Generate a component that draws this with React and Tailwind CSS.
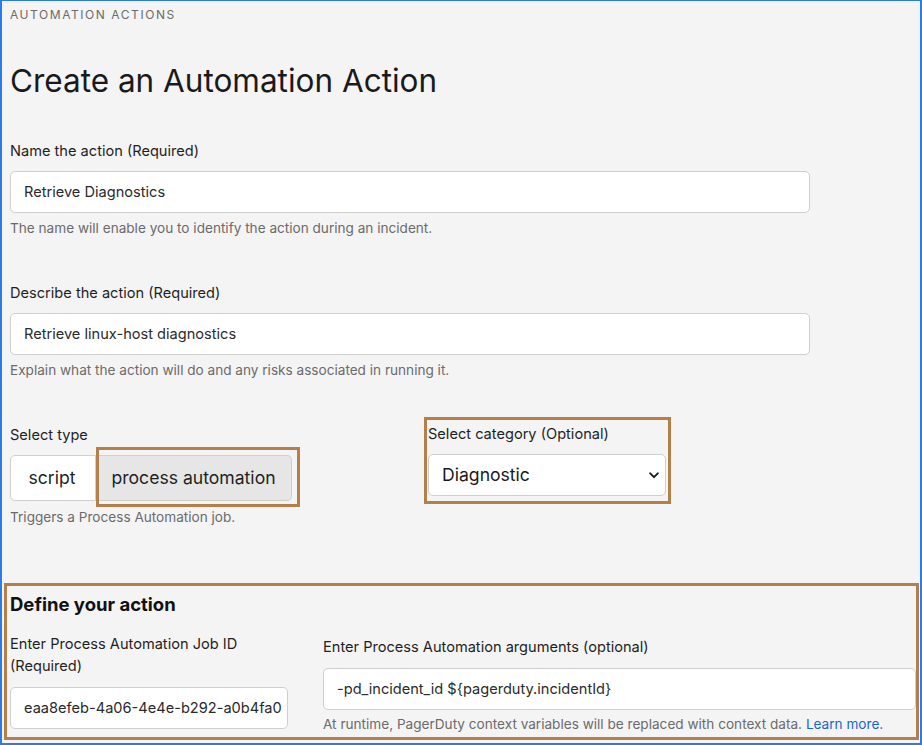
import React from "react";

const font = { fontFamily: "Inter, 'Noto Sans', sans-serif" };

function Field({ label, value, help }) {
  return (
    <div className="flex flex-col">
      <div className="text-[14.6px] leading-[20px] text-[#1f1f1f]">{label}</div>
      <div className="mt-[10px] w-[800px] h-[42px] bg-white border border-[#cfcfcf] rounded-[5px] flex items-center pl-[13px] pt-[2px] text-[14.6px] text-[#2a2a2a]">
        {value}
      </div>
      <div className="mt-[6px] text-[13.6px] leading-[18px] text-[#6b6b6b]">{help}</div>
    </div>
  );
}

export default function App() {
  return (
    <div
      style={font}
      className="w-[922px] h-[745px] bg-[#f4f4f4] border-l-2 border-t border-r-2 border-b-2 border-[#2a7de8] overflow-hidden"
    >
      <div className="pl-[8px] pt-[6px]">
        <div className="text-[12px] leading-[16px] tracking-[0.13em] text-[#6b6b6b]">AUTOMATION ACTIONS</div>
        <h1 className="mt-[40px] text-[31.5px] leading-[36px] text-[#1a1a1a] font-normal">Create an Automation Action</h1>
        <div className="mt-[42px]">
          <Field
            label="Name the action (Required)"
            value="Retrieve Diagnostics"
            help="The name will enable you to identify the action during an incident."
          />
        </div>
        <div className="mt-[46px]">
          <Field
            label="Describe the action (Required)"
            value="Retrieve linux-host diagnostics"
            help="Explain what the action will do and any risks associated in running it."
          />
        </div>

        <div className="flex mt-[38px]">
          <div className="w-[414px] pt-[8px]">
            <div className="text-[14.6px] leading-[20px] text-[#1f1f1f]">Select type</div>
            <div className="relative mt-[10px] flex h-[46px] text-[17.6px] text-[#1f1f1f]">
              <div className="w-[86px] bg-white border border-[#cfcfcf] rounded-l-[5px] flex items-center justify-center pr-[2px]">script</div>
              <div className="w-[196px] bg-[#e6e6e6] border border-l-0 border-[#cfcfcf] rounded-r-[5px] flex items-center justify-center">process automation</div>
              <div className="absolute left-[86px] top-[-8px] w-[204px] h-[60px] border-[3px] border-[#b37f4a] pointer-events-none" />
            </div>
            <div className="mt-[7px] text-[13.6px] leading-[18px] text-[#6b6b6b]">Triggers a Process Automation job.</div>
          </div>
          <div className="w-[247px] h-[87px] border-[3px] border-[#b37f4a] pl-[1px] pt-[4px]">
            <div className="text-[14.6px] leading-[20px] text-[#1f1f1f]">Select category (Optional)</div>
            <div className="mt-[10px] w-[238px] h-[42px] bg-white border border-[#cfcfcf] rounded-[5px] flex items-center justify-between pl-[13px] pr-[6px] text-[17.6px] text-[#1a1a1a]">
              <span>Diagnostic</span>
              <svg width="10" height="7" viewBox="0 0 10 7" fill="none">
                <path d="M1.2 1.3 L5 5.2 L8.8 1.3" stroke="#1a1a1a" strokeWidth="1.9" strokeLinecap="round" strokeLinejoin="round" />
              </svg>
            </div>
          </div>
        </div>

        <div className="mt-[57px] ml-[-6px] w-[915px] h-[157px] border-[3px] border-[#b37f4a] pl-[3px] pt-[6px]">
          <div className="text-[18.5px] leading-[24px] font-bold text-[#111]">Define your action</div>
          <div className="flex mt-[17px]">
            <div className="w-[278px]">
              <div className="text-[14.6px] leading-[22px] text-[#1f1f1f]">Enter Process Automation Job ID<br />(Required)</div>
              <div className="mt-[10px] h-[42px] bg-white border border-[#cfcfcf] rounded-[5px] flex items-center pl-[13px] pt-[2px] text-[14.6px] text-[#2a2a2a] overflow-hidden whitespace-nowrap">
                eaa8efeb-4a06-4e4e-b292-a0b4fa0
              </div>
            </div>
            <div className="ml-[35px] w-[593px] mt-[3px]">
              <div className="text-[14.6px] leading-[22px] text-[#1f1f1f]">Enter Process Automation arguments (optional)</div>
              <div className="mt-[10px] h-[42px] bg-white border border-[#cfcfcf] rounded-[5px] flex items-center pl-[13px] pt-[2px] text-[14.6px] text-[#2a2a2a]">
                -pd_incident_id ${"{pagerduty.incidentId}"}
              </div>
              <div className="mt-[5px] text-[13.6px] leading-[18px] text-[#6b6b6b] whitespace-nowrap">
                At runtime, PagerDuty context variables will be replaced with context data. <span className="text-[#1565d8]">Learn more.</span>
              </div>
            </div>
          </div>
        </div>
      </div>
    </div>
  );
}
